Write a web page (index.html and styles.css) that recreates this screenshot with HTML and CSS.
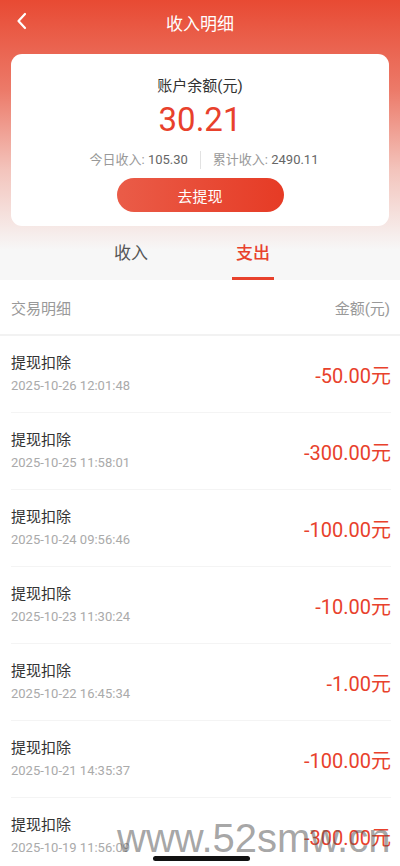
FILE: index.html
```html
<!DOCTYPE html>
<html lang="zh-CN">
<head>
<meta charset="utf-8">
<title>收入明细</title>
<link rel="stylesheet" href="styles.css">
</head>
<body>
    <div class="top">
        <div class="nav">
            <svg class="back" width="14" height="20" viewBox="0 0 14 20"><path d="M10 3 L3.5 10 L10 17" fill="none" stroke="#fff" stroke-width="2.2" stroke-linecap="round" stroke-linejoin="round"/></svg>
            <div class="nav-title">收入明细</div>
        </div>

        <div class="card">
            <div class="card-label">账户余额(元)</div>
            <div class="balance">30.21</div>
            <div class="stats">
                <span>今日收入: <b>105.30</b></span>
                <i class="sep"></i>
                <span>累计收入: <b>2490.11</b></span>
            </div>
            <button type="button" class="withdraw">去提现</button>
        </div>

        <div class="tabs">
            <div class="tab">收入</div>
            <div class="tab active">支出</div>
        </div>
    </div>

    <div class="list">
        <div class="list-head">
            <span>交易明细</span>
            <span>金额(元)</span>
        </div>
        <div class="row">
            <div><div class="row-title">提现扣除</div><div class="row-date">2025-10-26 12:01:48</div></div>
            <div class="row-amount">-50.00元</div>
        </div>
        <div class="row">
            <div><div class="row-title">提现扣除</div><div class="row-date">2025-10-25 11:58:01</div></div>
            <div class="row-amount">-300.00元</div>
        </div>
        <div class="row">
            <div><div class="row-title">提现扣除</div><div class="row-date">2025-10-24 09:56:46</div></div>
            <div class="row-amount">-100.00元</div>
        </div>
        <div class="row">
            <div><div class="row-title">提现扣除</div><div class="row-date">2025-10-23 11:30:24</div></div>
            <div class="row-amount">-10.00元</div>
        </div>
        <div class="row">
            <div><div class="row-title">提现扣除</div><div class="row-date">2025-10-22 16:45:34</div></div>
            <div class="row-amount">-1.00元</div>
        </div>
        <div class="row">
            <div><div class="row-title">提现扣除</div><div class="row-date">2025-10-21 14:35:37</div></div>
            <div class="row-amount">-100.00元</div>
        </div>
        <div class="row">
            <div><div class="row-title">提现扣除</div><div class="row-date">2025-10-19 11:56:09</div></div>
            <div class="row-amount">-300.00元</div>
        </div>
    </div>

    <div class="watermark">www.52smw.cn</div>
    <div class="home-bar"></div>
</body>
</html>
```

FILE: styles.css
```css
html, body {
    margin: 0;
    padding: 0;
}

body {
    width: 400px;
    height: 866px;
    overflow: hidden;
    position: relative;
    background: #f7f7f7;
    font-family: Roboto, "Noto Sans CJK SC", sans-serif;
    color: #333;
}

.top {
    background: linear-gradient(180deg, #e84a33 0px, #ec7a69 90px, #f3c4bc 170px, #f7f7f7 250px);
}

.nav {
    height: 44px;
    display: flex;
    align-items: center;
    justify-content: center;
    position: relative;
}

.back {
    position: absolute;
    left: 15px;
    top: 11px;
}

.nav-title {
    color: #fff;
    font-size: 17px;
}

.card {
    margin: 10px 11px 0;
    height: 172px;
    box-sizing: border-box;
    background: #fff;
    border-radius: 11px;
    padding-top: 22px;
    display: flex;
    flex-direction: column;
    align-items: center;
}

.card-label {
    font-size: 15px;
    line-height: 20px;
    color: #333;
}

.balance {
    margin-top: 5px;
    font-size: 33px;
    line-height: 38px;
    color: #e8412c;
}

.stats {
    margin-top: 11px;
    padding-left: 8px;
    display: flex;
    align-items: center;
    font-size: 13px;
    line-height: 20px;
    color: #999;
}

.stats b {
    font-weight: 400;
    color: #666;
}

.sep {
    width: 1px;
    height: 18px;
    background: #e2e2e2;
    margin: 0 12px;
}

.withdraw {
    margin-top: 8px;
    width: 167px;
    height: 34px;
    border: 0;
    border-radius: 17px;
    background: linear-gradient(90deg, #ea5c48, #e63b25);
    color: #fff;
    font-family: inherit;
    font-size: 15px;
    padding: 0;
}

.tabs {
    height: 54px;
    display: flex;
    padding-left: 111px;
    gap: 82px;
}

.tab {
    position: relative;
    font-size: 17px;
    line-height: 54px;
    color: #555;
    padding: 0 3px;
}

.tab.active {
    color: #e8412c;
    font-weight: 500;
}

.tab.active::after {
    content: "";
    position: absolute;
    left: -1px;
    right: -1px;
    bottom: 0;
    height: 3px;
    background: #e8412c;
}

.list {
    background: #fff;
}

.list-head {
    height: 54px;
    padding: 0 10px 0 11px;
    display: flex;
    justify-content: space-between;
    align-items: center;
    font-size: 15px;
    color: #999;
    border-bottom: 2px solid #f2f2f2;
}

.row {
    margin: 0 9px 0 11px;
    height: 77px;
    box-sizing: border-box;
    border-bottom: 1px solid #f4f4f4;
    display: flex;
    justify-content: space-between;
    align-items: center;
}

.row-title {
    font-size: 15px;
    line-height: 20px;
    color: #333;
}

.row-date {
    margin-top: 3px;
    font-size: 13px;
    line-height: 20px;
    color: #aaa;
}

.row-amount {
    font-size: 20px;
    color: #e8412c;
}

.watermark {
    position: absolute;
    left: 117px;
    top: 816px;
    font-family: "Liberation Sans", Arial, sans-serif;
    font-size: 40px;
    color: rgba(90, 90, 90, 0.55);
    white-space: nowrap;
}

.home-bar {
    position: absolute;
    left: 153px;
    top: 856px;
    width: 97px;
    height: 5px;
    border-radius: 3px;
    background: #111;
}
```
